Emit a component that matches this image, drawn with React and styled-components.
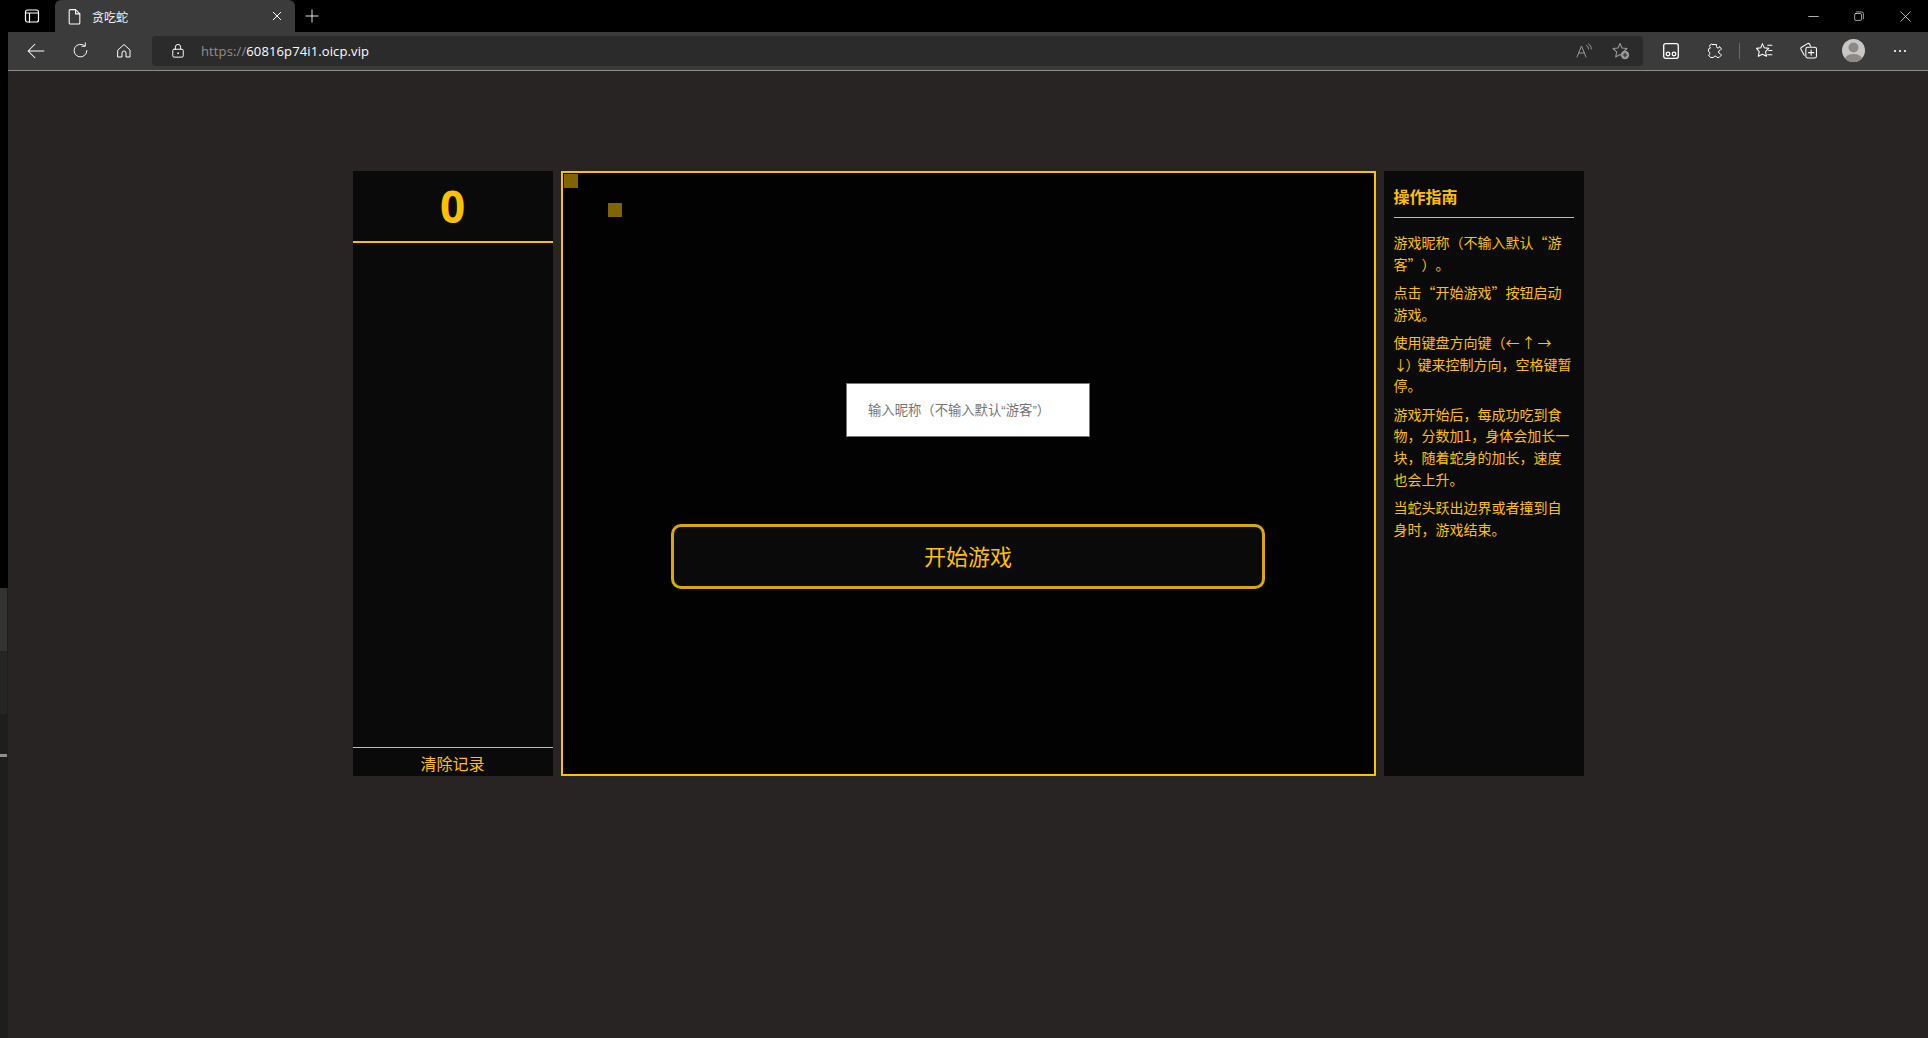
import React from "react";
import styled, { createGlobalStyle } from "styled-components";

const amber = "#ffc000";

const Global = createGlobalStyle`
  html, body { margin: 0; padding: 0; height: 100%; background: #000; overflow: hidden; }
  #root { height: 100%; }
  * { box-sizing: border-box; }
`;

const Window = styled.div`
  width: 1928px;
  height: 1038px;
  display: flex;
  flex-direction: column;
  font-family: "Noto Sans CJK SC", "Open Sans", sans-serif;
`;

const TabStrip = styled.div`
  height: 32px;
  flex: none;
  background: #000;
  display: flex;
  align-items: stretch;
  color: #fff;
`;

const StripSlot = styled.div`
  width: ${(p) => p.$w}px;
  flex: none;
  display: flex;
  align-items: center;
  justify-content: center;
  padding-left: ${(p) => p.$pl || 0}px;
`;

const Tab = styled.div`
  width: 240px;
  flex: none;
  background: #3b3b3b;
  border-radius: 6px 6px 0 0;
  display: flex;
  align-items: center;
  padding-left: 11px;
`;

const TabTitle = styled.span`
  font-size: 12px;
  margin-left: 9px;
  flex: 1;
  color: #f4f4f4;
`;

const TabClose = styled.span`
  width: 36px;
  display: flex;
  justify-content: center;
`;

const Spacer = styled.div`
  flex: 1;
`;

const Body = styled.div`
  flex: 1;
  display: flex;
  min-height: 0;
`;

const SideStrip = styled.div`
  width: 8px;
  flex: none;
  display: flex;
  flex-direction: column;
  background: #1e1e1e;
`;

const StripBlock = styled.div`
  height: ${(p) => p.$h}px;
  background: ${(p) => p.$c};
  flex: none;
  width: ${(p) => p.$w || 8}px;
`;

const Content = styled.div`
  flex: 1;
  display: flex;
  flex-direction: column;
`;

const Toolbar = styled.div`
  height: 39px;
  flex: none;
  background: #3b3b3b;
  border-bottom: 1px solid #8c8c8c;
  display: flex;
  align-items: center;
  padding: 0 0 1px 6px;
`;

const ToolButton = styled.div`
  width: 44px;
  height: 30px;
  flex: none;
  display: flex;
  align-items: center;
  justify-content: center;
  margin-left: ${(p) => p.$ml || 0}px;
`;

const AddressBar = styled.div`
  width: 1491px;
  height: 30px;
  flex: none;
  margin: 0 6px;
  background: #2b2b2b;
  border-radius: 4px;
  display: flex;
  align-items: center;
  padding-left: 19px;
  padding-right: 4px;
  font-family: "Open Sans", sans-serif;
  font-size: 13px;
`;

const Url = styled.span`
  margin-left: 16px;
  color: #fff;
  flex: 1;
  letter-spacing: 0.12px;
  span { color: #8f8f8f; }
`;

const AddressIcon = styled.span`
  width: 37px;
  display: flex;
  justify-content: center;
`;

const Separator = styled.div`
  width: 1px;
  height: 16px;
  background: #6b6b6b;
  margin: 0 2px;
  flex: none;
`;

const Avatar = styled.div`
  width: 23px;
  height: 23px;
  border-radius: 50%;
  background: #c9c7c5;
  overflow: hidden;
`;

const Page = styled.div`
  flex: 1;
  background: #282423;
  display: flex;
  justify-content: center;
  align-items: flex-start;
  gap: 8px;
  padding-top: 100px;
`;

const ScorePanel = styled.aside`
  width: 200px;
  height: 605px;
  background: #0a0a0a;
  display: flex;
  flex-direction: column;
`;

const Score = styled.div`
  height: 72px;
  flex: none;
  border-bottom: 2px solid ${amber};
  color: ${amber};
  font-family: "Open Sans", sans-serif;
  font-weight: 700;
  font-size: 44px;
  line-height: 70px;
  text-align: center;
`;

const Records = styled.div`
  flex: 1;
`;

const ClearButton = styled.div`
  height: 29px;
  flex: none;
  border-top: 1px solid ${amber};
  color: ${amber};
  font-size: 16px;
  line-height: 31px;
  text-align: center;
`;

const Board = styled.main`
  position: relative;
  width: 815px;
  height: 605px;
  background: #020202;
  border: 2px solid ${amber};
  display: flex;
  flex-direction: column;
  align-items: center;
  padding-top: 210px;
  gap: 87px;
`;

const Cell = styled.div`
  position: absolute;
  left: ${(p) => p.$x}px;
  top: ${(p) => p.$y}px;
  width: 14px;
  height: 14px;
  background: #7f6400;
`;

const NameInput = styled.input`
  width: 244px;
  height: 54px;
  background: #fff;
  border: 1px solid #767676;
  padding: 0 21px;
  font-family: "Liberation Sans", "Noto Sans CJK SC", sans-serif;
  font-size: 13.33px;
  outline: none;
  &::placeholder { color: #757575; opacity: 1; }
`;

const StartButton = styled.button`
  width: 594px;
  height: 65px;
  background: #0a0a0a;
  border: 3px solid #dba70a;
  border-radius: 10px;
  color: ${amber};
  font-family: "Noto Sans CJK SC", sans-serif;
  font-size: 22px;
  padding: 0 0 3px;
`;

const GuidePanel = styled.aside`
  width: 200px;
  height: 605px;
  background: #0a0a0a;
  padding: 10px;
  color: ${amber};
`;

const GuideTitle = styled.h3`
  margin: 0 0 14px;
  height: 37px;
  border-bottom: 1px solid ${amber};
  font-size: 16px;
  font-weight: 700;
  line-height: 30px;
`;

const GuideText = styled.p`
  margin: 0 0 6.6px;
  font-size: 14px;
  line-height: 21.7px;
  text-spacing-trim: space-all;
`;

const Arrows = styled.span`
  letter-spacing: 2px;
`;

const NoBreak = styled.span`
  white-space: nowrap;
`;

const Tight = styled.span`
  letter-spacing: -2px;
`;

const Icon = ({ size = 16, sw = 1, stroke = "#fff", children }) => (
  <svg width={size} height={size} viewBox="0 0 16 16" fill="none" stroke={stroke} strokeWidth={sw} strokeLinecap="round" strokeLinejoin="round">
    {children}
  </svg>
);

export default function App() {
  return (
    <Window>
      <Global />
      <TabStrip>
        <StripSlot $w={55} $pl={9}>
          <Icon size={16} sw={1.2}>
            <rect x="1.5" y="2" width="13" height="12" rx="2" />
            <path d="M1.5 5h13M5.5 5v9" />
          </Icon>
        </StripSlot>
        <Tab>
          <Icon size={17}>
            <path d="M3 2.5a1 1 0 0 1 1-1h5l4 4v8.500a1 1 0 0 1-1 1H4a1 1 0 0 1-1-1z" />
            <path d="M9 1.500V5.500h4" />
          </Icon>
          <TabTitle>贪吃蛇</TabTitle>
          <TabClose>
            <Icon size={10} sw={1.6}>
              <path d="M2 2l12 12M14 2L2 14" />
            </Icon>
          </TabClose>
        </Tab>
        <StripSlot $w={34}>
          <Icon size={14}>
            <path d="M8 1v14M1 8h14" />
          </Icon>
        </StripSlot>
        <Spacer />
        <StripSlot $w={46}>
          <Icon size={11}>
            <path d="M1 8h14" />
          </Icon>
        </StripSlot>
        <StripSlot $w={46}>
          <Icon size={10}>
            <rect x="1" y="4" width="11" height="11" rx="2" />
            <path d="M4 1.500h8a3 3 0 0 1 3 3v8" />
          </Icon>
        </StripSlot>
        <StripSlot $w={46}>
          <Icon size={11}>
            <path d="M1 1l14 14M15 1L1 15" />
          </Icon>
        </StripSlot>
      </TabStrip>
      <Body>
        <SideStrip>
          <StripBlock $h={556} $c="#000" />
          <StripBlock $h={63} $c="#333" $w={7} />
          <StripBlock $h={63} $c="#252525" $w={7} />
          <StripBlock $h={40} $c="#1e1e1e" $w={7} />
          <StripBlock $h={3} $c="#8f8f8f" $w={7} />
        </SideStrip>
        <Content>
          <Toolbar>
            <ToolButton>
              <Icon size={18} sw={0.9}>
                <path d="M15 8H1M7 2L1 8l6 6" />
              </Icon>
            </ToolButton>
            <ToolButton>
              <Icon size={17} sw={0.9}>
                <path d="M14 8a6 6 0 1 1-2-4.400" />
                <path d="M12.500 0.800v3.200H9.300" />
              </Icon>
            </ToolButton>
            <ToolButton>
              <Icon size={16}>
                <path d="M2 7l6-5.500L14 7v7h-4v-4a2 2 0 0 0-4 0v4H2z" />
              </Icon>
            </ToolButton>
            <AddressBar>
              <Icon size={14} sw={1.1}>
                <rect x="2" y="6" width="12" height="9" rx="1.500" />
                <path d="M5 6V3.500a3 3 0 0 1 6 0V6" />
                <circle cx="8" cy="10.500" r="0.500" />
              </Icon>
              <Url>
                <span>https://</span>60816p74i1.oicp.vip
              </Url>
              <AddressIcon>
                <Icon size={16} stroke="#9a9a9a" sw={1}>
                  <path d="M1 14L5.500 3 10 14M2.800 10h5.400" />
                  <path d="M10.500 2.500c1.500.8 2 2 2 3.500M12.500 1c2 1.200 2.800 3 2.800 5" />
                </Icon>
              </AddressIcon>
              <AddressIcon>
                <svg width="18" height="18" viewBox="0 0 18 18" fill="none" stroke="#9a9a9a" strokeWidth="1.100" strokeLinejoin="round">
                  <path d="M8 1.500l2 4.500 5 .5-3.700 3.300L12.300 15 8 12.500 3.700 15l1-5.200L1 6.500 6 6z" />
                  <circle cx="13" cy="13" r="4.200" fill="#9a9a9a" stroke="none" />
                  <path d="M13 10.800v4.400M10.800 13h4.400" stroke="#2b2b2b" />
                </svg>
              </AddressIcon>
            </AddressBar>
            <ToolButton>
              <svg width="16" height="16" viewBox="0 0 16 16" fill="none" stroke="#fff" strokeWidth="1.300">
                <rect x="0.700" y="0.700" width="14.600" height="14.600" rx="2" />
                <circle cx="5" cy="11" r="1.800" />
                <circle cx="11" cy="11" r="1.800" />
              </svg>
            </ToolButton>
            <ToolButton>
              <Icon size={16}>
                <path d="M6 1.500h3.500v2a1.500 1.500 0 0 0 3 0h0l2 2.500-1.500 1.500a1.500 1.500 0 0 0 0 3l1.500 1.500-2.500 2.500H10a1.800 1.800 0 0 0-3.500 0H3.500L1.500 12a1.800 1.800 0 0 0 0-3.500V6l2-1a1.500 1.500 0 0 1 2.500-3.500z" />
              </Icon>
            </ToolButton>
            <Separator />
            <ToolButton>
              <Icon size={17}>
                <path d="M6 1.500L7.800 5.500 12 6 9 9l.8 4.500L6 11.500 2.200 13.500 3 9 0.500 6l4-.5z" />
                <path d="M11 3h4M12 8h3M11 12h4" />
              </Icon>
            </ToolButton>
            <ToolButton>
              <Icon size={17}>
                <rect x="5.500" y="5" width="10" height="10" rx="1.500" />
                <path d="M10.500 7.500v5M8 10h5" />
                <path d="M4 12.500L1 7a1.500 1.500 0 0 1 .5-2L7 1.500a1.500 1.500 0 0 1 2 .5L10 4" />
              </Icon>
            </ToolButton>
            <ToolButton $ml={1}>
              <Avatar>
                <svg width="23" height="23" viewBox="0 0 23 23">
                  <circle cx="11.500" cy="8.500" r="5" fill="#8d8987" />
                  <ellipse cx="11.500" cy="20" rx="8.500" ry="5" fill="#8d8987" />
                </svg>
              </Avatar>
            </ToolButton>
            <ToolButton $ml={3}>
              <svg width="14" height="4" viewBox="0 0 14 4" fill="#fff">
                <circle cx="2" cy="2" r="1.100" />
                <circle cx="7" cy="2" r="1.100" />
                <circle cx="12" cy="2" r="1.100" />
              </svg>
            </ToolButton>
          </Toolbar>
          <Page>
            <ScorePanel>
              <Score>0</Score>
              <Records />
              <ClearButton>清除记录</ClearButton>
            </ScorePanel>
            <Board>
              <Cell $x={1} $y={1} />
              <Cell $x={45} $y={30} />
              <NameInput placeholder="输入昵称（不输入默认“游客”）" />
              <StartButton>开始游戏</StartButton>
            </Board>
            <GuidePanel>
              <GuideTitle>操作指南</GuideTitle>
              <GuideText>游戏昵称（不输入默认“游客”）。</GuideText>
              <GuideText>点击“开始游戏”按钮启动游戏。</GuideText>
              <GuideText>
                使用键盘方向键（<Arrows>←↑→</Arrows>
                <wbr />
                <NoBreak><Tight>↓）</Tight>键来控制</NoBreak>方向，空格键暂停。
              </GuideText>
              <GuideText>游戏开始后，每成功吃到食物，分数加1，身体会加长一块，随着蛇身的加长，速度也会上升。</GuideText>
              <GuideText>当蛇头跃出边界或者撞到自身时，游戏结束。</GuideText>
            </GuidePanel>
          </Page>
        </Content>
      </Body>
    </Window>
  );
}
